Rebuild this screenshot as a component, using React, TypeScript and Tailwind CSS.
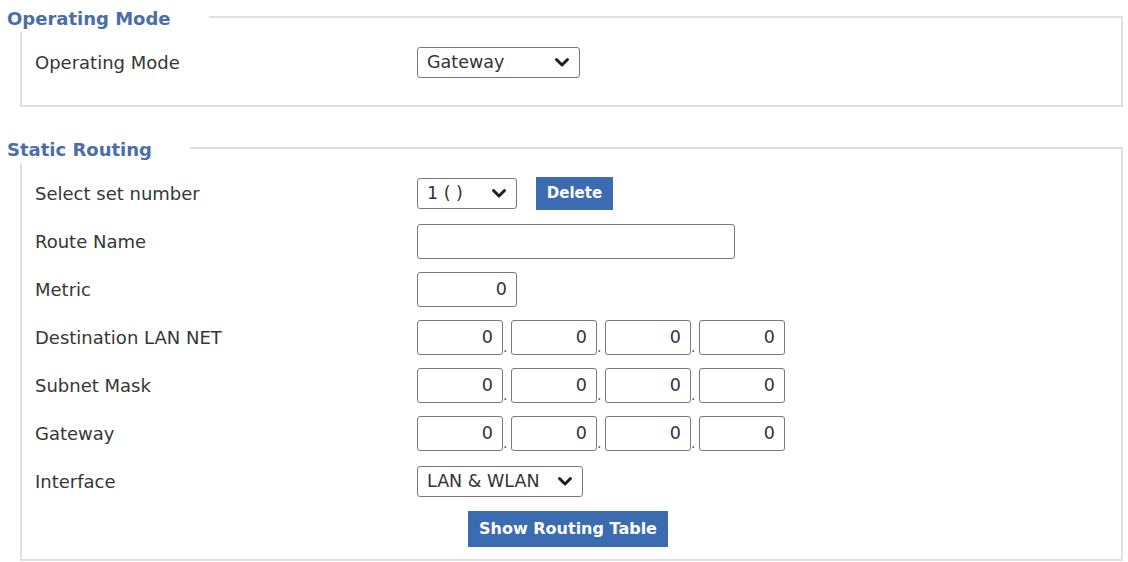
import React from "react";

function Chevron() {
  return (
    <svg width="16" height="11" viewBox="0 0 16 11" className="shrink-0">
      <polyline
        points="2.5,2.5 8,8 13.5,2.5"
        fill="none"
        stroke="#1f1f1f"
        strokeWidth="3"
        strokeLinecap="round"
        strokeLinejoin="round"
      />
    </svg>
  );
}

function Fieldset({
  title,
  children,
  className = "",
}: {
  title: string;
  children: React.ReactNode;
  className?: string;
}) {
  return (
    <div className={`border-2 border-[#e0e0e0] ${className}`}>
      {/* legend sits over the top border */}
      <div className="-mt-[12px] -ml-[15px] w-fit bg-white pr-[38px] text-[18px] font-bold leading-[26px] text-[#4a6ea9]">
        {title}
      </div>
      {children}
    </div>
  );
}

function Row({ label, children }: { label: string; children: React.ReactNode }) {
  return (
    <div className="flex h-[48px] items-center pl-[13px]">
      <div className="w-[382px] text-[18px] text-[#363636]">{label}</div>
      <div className="flex items-center">{children}</div>
    </div>
  );
}

function FakeSelect({ value, width }: { value: string; width: string }) {
  return (
    <div
      className={`flex h-[31px] ${width} items-center justify-between rounded-[3px] border-[1.5px] border-[#7a7a7a] bg-white pl-[9px] pr-[9px] text-[17.5px] text-[#333]`}
    >
      <span>{value}</span>
      <Chevron />
    </div>
  );
}

function NumInput({ width = "w-[86px]" }: { width?: string }) {
  return (
    <input
      defaultValue="0"
      className={`h-[35px] ${width} rounded-[3px] border-[1.5px] border-[#7a7a7a] bg-white pr-[9px] text-right text-[17.5px] text-[#333] outline-none`}
    />
  );
}

function IpInput() {
  return (
    <div className="flex items-end">
      <NumInput />
      <span className="w-[8px] pb-[1px] text-[14px] leading-none text-[#555]">.</span>
      <NumInput />
      <span className="w-[8px] pb-[1px] text-[14px] leading-none text-[#555]">.</span>
      <NumInput />
      <span className="w-[8px] pb-[1px] text-[14px] leading-none text-[#555]">.</span>
      <NumInput />
    </div>
  );
}

export default function App() {
  return (
    <div className="min-h-screen bg-white pl-[20px] pr-[5px] pt-[16px] font-['DejaVu_Sans',sans-serif]">
      {/* Operating Mode */}
      <Fieldset title="Operating Mode" className="pb-[19px]">
        <div className="mt-[6px]">
          <Row label="Operating Mode">
            <FakeSelect value="Gateway" width="w-[163px]" />
          </Row>
        </div>
      </Fieldset>

      {/* Static Routing */}
      <Fieldset title="Static Routing" className="mt-[40px] pb-[6px]">
        <div className="mt-[6px]">
          <Row label="Select set number">
            <FakeSelect value="1 ( )" width="w-[100px]" />
            <button className="ml-[19px] h-[33px] w-[77px] bg-[#3b6cb2] text-[15px] font-bold text-white">
              Delete
            </button>
          </Row>
          <Row label="Route Name">
            <input className="h-[35px] w-[318px] rounded-[3px] border-[1.5px] border-[#7a7a7a] bg-white outline-none" />
          </Row>
          <Row label="Metric">
            <NumInput width="w-[100px]" />
          </Row>
          <Row label="Destination LAN NET">
            <IpInput />
          </Row>
          <Row label="Subnet Mask">
            <IpInput />
          </Row>
          <Row label="Gateway">
            <IpInput />
          </Row>
          <Row label="Interface">
            <FakeSelect value="LAN & WLAN" width="w-[166px]" />
          </Row>
          <div className="flex h-[48px] items-center justify-center pr-[7px]">
            <button className="h-[36px] w-[200px] bg-[#3b6cb2] text-[16px] font-bold text-white">
              Show Routing Table
            </button>
          </div>
        </div>
      </Fieldset>
    </div>
  );
}
